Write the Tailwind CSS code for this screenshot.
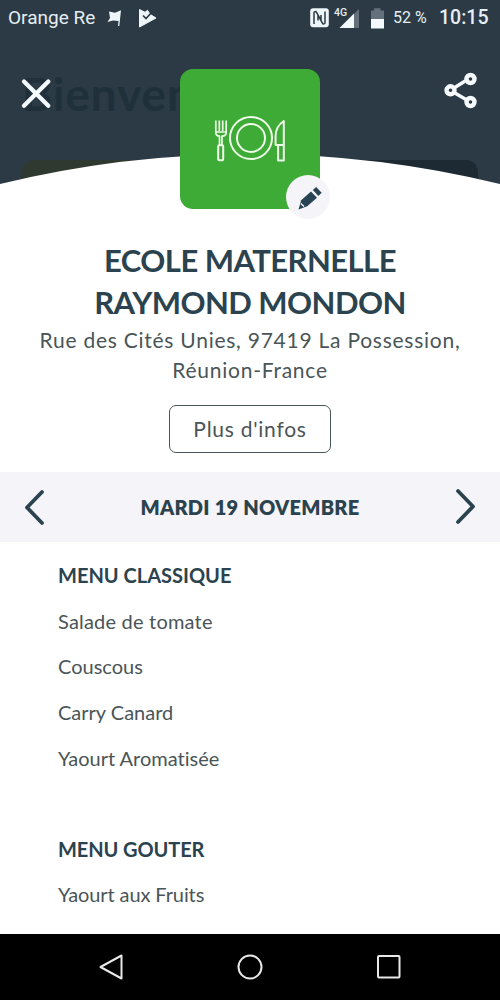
<!DOCTYPE html>
<html lang="fr">
<head>
    <meta charset="UTF-8">
    <meta name="viewport" content="width=device-width, initial-scale=1.0">
    <title>Menu de la cantine</title>
    <script src="https://cdn.jsdelivr.net/npm/@tailwindcss/browser@4"></script>
</head>
<body class="w-[500px] h-[1000px] overflow-hidden flex flex-col bg-white text-[#4a5557] font-['Lato','Liberation_Sans',sans-serif] [font-variant-ligatures:none]">

    <!-- Header -->
    <header class="relative h-[222px] shrink-0">
        <!-- Dimmed home screen behind the sheet -->
        <div class="absolute inset-x-0 top-0 h-[186px] bg-[#2b3a45] overflow-hidden">
            <div class="absolute left-[22px] top-[65px] text-[46px] leading-[58px] font-bold tracking-[0.9px] text-[#20303a]">Bienvenue</div>
            <div class="absolute left-[22px] top-[160px] w-[220px] h-10 rounded-xl bg-[#30392f]"></div>
            <div class="absolute right-[22px] top-[160px] w-[220px] h-10 rounded-xl bg-[#1d2a33]"></div>
        </div>
        <svg class="absolute left-0 top-[150px]" width="500" height="72" viewBox="0 150 500 72">
            <path d="M0 184A1056 1056 0 0 1 500 184V222H0Z" fill="#fff"/>
        </svg>

        <!-- Status bar -->
        <div class="relative h-9 flex items-center text-[#e6eef3] font-['Roboto',sans-serif]">
            <span class="ml-2 w-[90px] text-[19px] whitespace-nowrap">Orange Re</span>
            <svg class="ml-[9px]" width="15" height="18" viewBox="107 8 15 18" fill="#eef5f9">
                <path d="M109 10.500l6 1.200 6-2.500-1.700 15.800h-1.300l.5-5-5.500-.5-5.500 1.500 2.500-4z"/>
            </svg>
            <svg class="ml-4" width="20" height="20" viewBox="138 7 20 20">
                <path d="M139.500 8.500l5.500 2.800 2.500-2 2.500 4 6 3.700-16.500 9z" fill="#eef5f9" stroke="#eef5f9" stroke-linejoin="round"/>
                <path d="M143 14.500l3 3 6-6.500" fill="none" stroke="#2b3a45" stroke-width="1.700"/>
            </svg>
            <svg class="ml-auto" width="20" height="20" viewBox="310 7 20 20">
                <rect x="310.200" y="7.300" width="18.600" height="19" rx="3" fill="#eef5f9"/>
                <path d="M314 23V11.500q0-1 2-1l5 9V14M325 10.500V22q0 1-2 1l-5-9v5.500" fill="none" stroke="#2b3a45" stroke-width="1.500"/>
            </svg>
            <div class="relative ml-1 w-[25px] h-5">
                <span class="absolute left-0 -top-[1px] text-[10.500px] leading-3 font-medium">4G</span>
                <svg class="absolute inset-0" width="25" height="20" viewBox="334 7 25 20">
                    <path d="M359 8V27H354V13z" fill="#65717a"/>
                    <path d="M339.500 27L354 12.500V27z" fill="#f4fafc"/>
                </svg>
            </div>
            <svg class="ml-3" width="13" height="21" viewBox="371 6 13 21">
                <path d="M371 8.500h3V6.200h6.500v2.300h3.500V17h-13z" fill="#65717a"/>
                <path d="M371 17h13v9.500h-13z" fill="#f4fafc"/>
            </svg>
            <span class="ml-[9px] w-[34px] text-[16px] whitespace-nowrap">52 %</span>
            <span class="ml-[12px] w-[49px] mr-[12px] text-[19.500px] font-medium whitespace-nowrap">10:15</span>
        </div>

        <!-- Close -->
        <svg class="absolute left-5 top-[77px]" width="32" height="32" viewBox="20 77 32 32">
            <path d="M24 81.500l24.300 24.300M48.300 81.500L24 105.800" stroke="#f4fafe" stroke-width="4.300" stroke-linecap="round"/>
        </svg>

        <!-- Share -->
        <svg class="absolute left-[442px] top-[70px]" width="37" height="40" viewBox="442 70 37 40" fill="none" stroke="#f7fbfe">
            <path d="M454 88l12-7.500M454 92.500l12 7" stroke-width="3.400"/>
            <g stroke-width="4.400">
                <circle cx="450.500" cy="90.300" r="4"/>
                <circle cx="470.500" cy="79" r="4"/>
                <circle cx="470.500" cy="102" r="4"/>
            </g>
        </svg>

        <!-- Logo tile -->
        <div class="absolute left-[180px] top-[69px] size-[140px] rounded-[13px] bg-[#3eab37]">
            <svg width="140" height="140" viewBox="180 69 140 140" fill="none" stroke="#effbe9" stroke-width="2" stroke-linejoin="round">
                <circle cx="251" cy="138" r="21"/>
                <circle cx="251" cy="138" r="14"/>
                <path d="M215.800 120.500v12q0 3.500 3.700 3.700v9h2.500v-9q4.200-.2 4.200-3.700v-12M219.300 120.500v10.500M222.700 120.500v10.500M216 132h10" stroke-width="1.700"/>
                <rect x="218.200" y="145.200" width="5" height="15" rx="1"/>
                <path d="M283.800 121v39.500h-5.700v-15.500h-2.500v-9q0-9.500 8.200-15zM276 145h7.800"/>
            </svg>
        </div>

        <!-- Edit badge -->
        <div class="absolute left-[286px] top-[175px] size-[44px] rounded-full bg-[#f5f4f8]">
            <svg width="44" height="44" viewBox="286 175 44 44">
                <path d="M298.500 209.500l2.700-9.300L311 191.500l6 6.200-9.800 8.600z" fill="#284454"/>
                <path d="M314.500 188.500l5.500 5.800" stroke="#284454" stroke-width="4.600"/>
                <path d="M300.800 203.500l3.200 3" stroke="#f5f4f8" stroke-width="1.500"/>
            </svg>
        </div>
    </header>

    <!-- School -->
    <section class="h-[250px] shrink-0 pt-[17px] flex flex-col items-center text-center whitespace-nowrap">
        <h1 class="text-[31px] leading-[42px] font-bold tracking-[-0.55px] text-[#2b434e]">ECOLE MATERNELLE<br>RAYMOND MONDON</h1>
        <p class="mt-[2px] text-[21px] leading-[30px] tracking-[0.75px]">Rue des Cités Unies, 97419 La Possession,<br>Réunion-France</p>
        <button class="mt-5 w-[162px] h-[48px] rounded-[7px] border-[1.500px] border-[#4a5557] text-[21px] tracking-[0.75px]">Plus d'infos</button>
    </section>

    <!-- Day picker -->
    <nav class="h-[70px] shrink-0 flex items-center justify-between px-[22px] bg-[#f5f4f8] text-[#2b434e]">
        <svg width="26" height="40" viewBox="0 0 26 40" fill="none" stroke="currentColor" stroke-width="3.800" stroke-linecap="round" stroke-linejoin="round">
            <path d="M20 5L5 20.500L20 36"/>
        </svg>
        <h2 class="text-[20px] font-extrabold tracking-[0.25px]">MARDI 19 NOVEMBRE</h2>
        <svg width="26" height="40" viewBox="0 0 26 40" fill="none" stroke="currentColor" stroke-width="3.800" stroke-linecap="round" stroke-linejoin="round">
            <path d="M6 4L21 19.500L6 35"/>
        </svg>
    </nav>

    <!-- Menus -->
    <main class="h-[392px] shrink-0 pl-[58px] pt-[11px] text-[20px] leading-[45.700px]">
        <h3 class="font-bold text-[#2b434e]">MENU CLASSIQUE</h3>
        <ul class="mb-[45px]">
            <li class="tracking-[0.2px]">Salade de tomate</li>
            <li>Couscous</li>
            <li>Carry Canard</li>
            <li>Yaourt Aromatisée</li>
        </ul>
        <h3 class="font-bold tracking-[-0.1px] text-[#2b434e]">MENU GOUTER</h3>
        <ul>
            <li class="tracking-[-0.1px]">Yaourt aux Fruits</li>
        </ul>
    </main>

    <!-- Android navigation -->
    <footer class="h-[66px] shrink-0 flex items-center justify-between px-[97px] bg-black">
        <svg width="28" height="28" viewBox="0 0 28 28" fill="none" stroke="#e8e8e8" stroke-width="2" stroke-linejoin="round">
            <path d="M24.500 2.500v23L3.500 14z"/>
        </svg>
        <svg width="28" height="28" viewBox="0 0 28 28" fill="none" stroke="#e8e8e8" stroke-width="2">
            <circle cx="14" cy="14" r="11.500"/>
        </svg>
        <svg width="28" height="28" viewBox="0 0 28 28" fill="none" stroke="#e8e8e8" stroke-width="2">
            <rect x="3" y="3" width="21.500" height="21.500" rx="1"/>
        </svg>
    </footer>

</body>
</html>
